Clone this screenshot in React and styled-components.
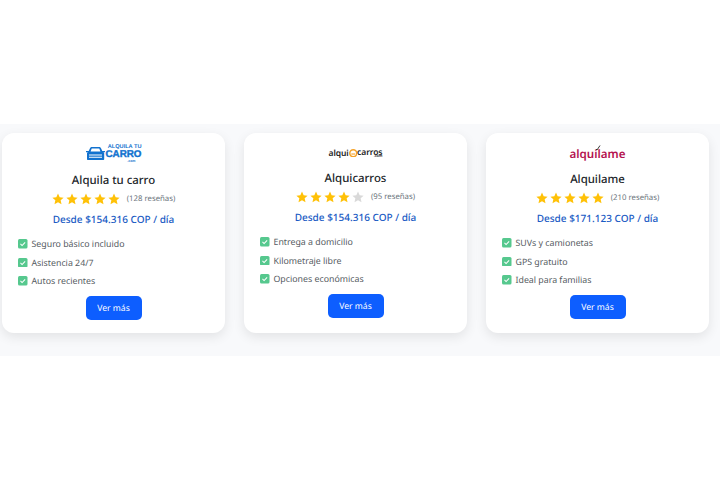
import React from "react";
import styled, { createGlobalStyle } from "styled-components";

const Global = createGlobalStyle`
  html, body { margin: 0; padding: 0; background: #fff; }
  body { font-family: "Noto Sans", "Open Sans", sans-serif; text-rendering: geometricPrecision; }
`;
const Page = styled.div`
  height: 480px;
  display: flex;
  align-items: center;
  overflow: hidden;
`;
const Section = styled.section`
  width: 100%;
  height: 232px;
  padding: 9px 11px 0 2px;
  box-sizing: border-box;
  background: #f8f9fb;
  display: grid;
  grid-template-columns: repeat(3, 223px);
  column-gap: 19px;
  align-items: start;
`;
const Card = styled.article`
  height: 200px;
  box-sizing: border-box;
  background: #fff;
  border-radius: 12px;
  box-shadow: 0 4px 12px rgba(0, 0, 0, 0.09);
  padding: 11px 16px 0;
  display: flex;
  flex-direction: column;
  align-items: center;
`;
const LogoBox = styled.div`
  height: ${(p) => p.$h}px;
  display: flex;
  align-items: center;
  justify-content: center;
  gap: 1px;
`;
const Name = styled.h3`
  margin: 8px 0 0;
  font-size: 11.4px;
  line-height: 18px;
  font-weight: 500;
  color: #212529;
`;
const Rating = styled.div`
  height: 17px;
  display: flex;
  align-items: center;
  gap: 5px;
`;
const Stars = styled.div`
  display: flex;
  gap: 2px;
`;
const Count = styled.span`
  margin-left: 2px;
  font-size: 7.8px;
  color: #6c757d;
`;
const Price = styled.div`
  margin-top: 4px;
  font-size: 10px;
  line-height: 16px;
  font-weight: 500;
  color: #1a5bc4;
`;
const Features = styled.ul`
  list-style: none;
  margin: 10px 0 0;
  padding: 0;
  align-self: stretch;
  display: flex;
  flex-direction: column;
  gap: 4.6px;
`;
const Feature = styled.li`
  display: flex;
  align-items: center;
  gap: 4px;
  font-size: 8.8px;
  line-height: 14px;
  color: #565c62;
`;
const Button = styled.button`
  margin-top: 8px;
  width: 56px;
  height: 24px;
  border: none;
  border-radius: 5px;
  background: #0d5eff;
  color: #fff;
  font: 400 8.6px "Noto Sans", sans-serif;
  text-rendering: geometricPrecision;
  padding: 0;
`;
const CarroLogo = styled.div`
  display: flex;
  flex-direction: column;
  align-items: flex-end;
  color: #1272cf;
  font-family: "Liberation Sans", sans-serif;
  font-weight: 700;
`;
const CarroTop = styled.span`
  font-size: 5.6px;
  line-height: 5px;
`;
const CarroMain = styled.span`
  font-size: 9.8px;
  line-height: 9px;
  -webkit-text-stroke: 0.4px #1272cf;
`;
const CarroCom = styled.span`
  font-size: 3.5px;
  line-height: 4px;
  margin-right: 6px;
`;
const QuiLogo = styled.div`
  display: flex;
  align-items: center;
  font-family: "Noto Sans", sans-serif;
  font-weight: 600;
  font-size: 8.5px;
  line-height: 11px;
  letter-spacing: -0.1px;
  color: #222;
`;
const QuiWord = styled.span`
  display: flex;
  flex-direction: column;
  align-items: flex-end;
`;
const QuiCom = styled.span`
  margin-top: -3px;
  font-size: 3.8px;
  line-height: 4px;
`;
const MeLogo = styled.div`
  position: relative;
  margin-top: 3px;
  font-family: "Noto Sans", sans-serif;
  font-weight: 600;
  font-size: 11.6px;
  line-height: 16px;
  color: #b4124f;
`;
const MeCheck = styled.svg`
  position: absolute;
  left: 25px;
  top: -2px;
`;

const Star = ({ on }) => (
  <svg width="12" height="12" viewBox="0 0 24 24">
    <path
      fill={on ? "#ffc107" : "#d9d9d9"}
      d="M12 1.200l3.300 7.300 7.900.9-5.900 5.300 1.700 7.900L12 18.600l-7 4 1.700-7.900L.8 9.400l7.900-.9z"
    />
  </svg>
);
const Check = () => (
  <svg width="9.500" height="9.500" viewBox="0 0 10 10">
    <rect width="10" height="10" rx="1.600" fill="#56c88e" />
    <path d="M2.600 5.200l1.700 1.700 3.200-3.400" fill="none" stroke="#fff" strokeWidth="1.100" />
  </svg>
);
const CarIcon = () => (
  <svg width="19" height="14" viewBox="0 0 19 14">
    <path
      fill="#1272cf"
      d="M4 1.200C4.400.4 5 0 6 0h7c1 0 1.600.4 2 1.200L16.300 4H19v1.200h-1.500l.7 1V12c0 .6-.4 1-1 1H2c-.6 0-1-.4-1-1V6.200l.7-1H0V4h2.700z"
    />
    <path fill="#fff" d="M4.600 4.500L5.700 1.500h7.600l1.100 3zM3 7.500h13v1H3zM3 9.800h13v1H3z" />
  </svg>
);
const QuiIcon = () => (
  <svg width="8.500" height="8.500" viewBox="0 0 11 11">
    <circle cx="5.500" cy="5.500" r="4.500" fill="none" stroke="#f5a32a" strokeWidth="2" />
    <path d="M3 6.500h5" stroke="#f5a32a" strokeWidth="1.500" />
  </svg>
);

const cards = [
  {
    name: "Alquila tu carro",
    logoH: 20,
    stars: 5,
    count: "(128 reseñas)",
    price: "Desde $154.316 COP / día",
    features: ["Seguro básico incluido", "Asistencia 24/7", "Autos recientes"],
    logo: (
      <>
        <CarIcon />
        <CarroLogo>
          <CarroTop>ALQUILA TU</CarroTop>
          <CarroMain>CARRO</CarroMain>
          <CarroCom>.com</CarroCom>
        </CarroLogo>
      </>
    ),
  },
  {
    name: "Alquicarros",
    logoH: 18,
    stars: 4,
    count: "(95 reseñas)",
    price: "Desde $154.316 COP / día",
    features: ["Entrega a domicilio", "Kilometraje libre", "Opciones económicas"],
    logo: (
      <QuiLogo>
        alqui
        <QuiIcon />
        <QuiWord>
          carros
          <QuiCom>.com</QuiCom>
        </QuiWord>
      </QuiLogo>
    ),
  },
  {
    name: "Alquilame",
    logoH: 19,
    stars: 5,
    count: "(210 reseñas)",
    price: "Desde $171.123 COP / día",
    features: ["SUVs y camionetas", "GPS gratuito", "Ideal para familias"],
    logo: (
      <MeLogo>
        alquilame
        <MeCheck width="6" height="6" viewBox="0 0 6 6">
          <path d="M1 4l1 1 3-4.500" fill="none" stroke="#222" strokeWidth="0.900" />
        </MeCheck>
      </MeLogo>
    ),
  },
];

export default function App() {
  return (
    <Page>
      <Global />
      <Section>
        {cards.map((c) => (
          <Card key={c.name}>
            <LogoBox $h={c.logoH}>{c.logo}</LogoBox>
            <Name>{c.name}</Name>
            <Rating>
              <Stars>
                {[1, 2, 3, 4, 5].map((n) => (
                  <Star key={n} on={n <= c.stars} />
                ))}
              </Stars>
              <Count>{c.count}</Count>
            </Rating>
            <Price>{c.price}</Price>
            <Features>
              {c.features.map((f) => (
                <Feature key={f}>
                  <Check />
                  {f}
                </Feature>
              ))}
            </Features>
            <Button>Ver más</Button>
          </Card>
        ))}
      </Section>
    </Page>
  );
}
